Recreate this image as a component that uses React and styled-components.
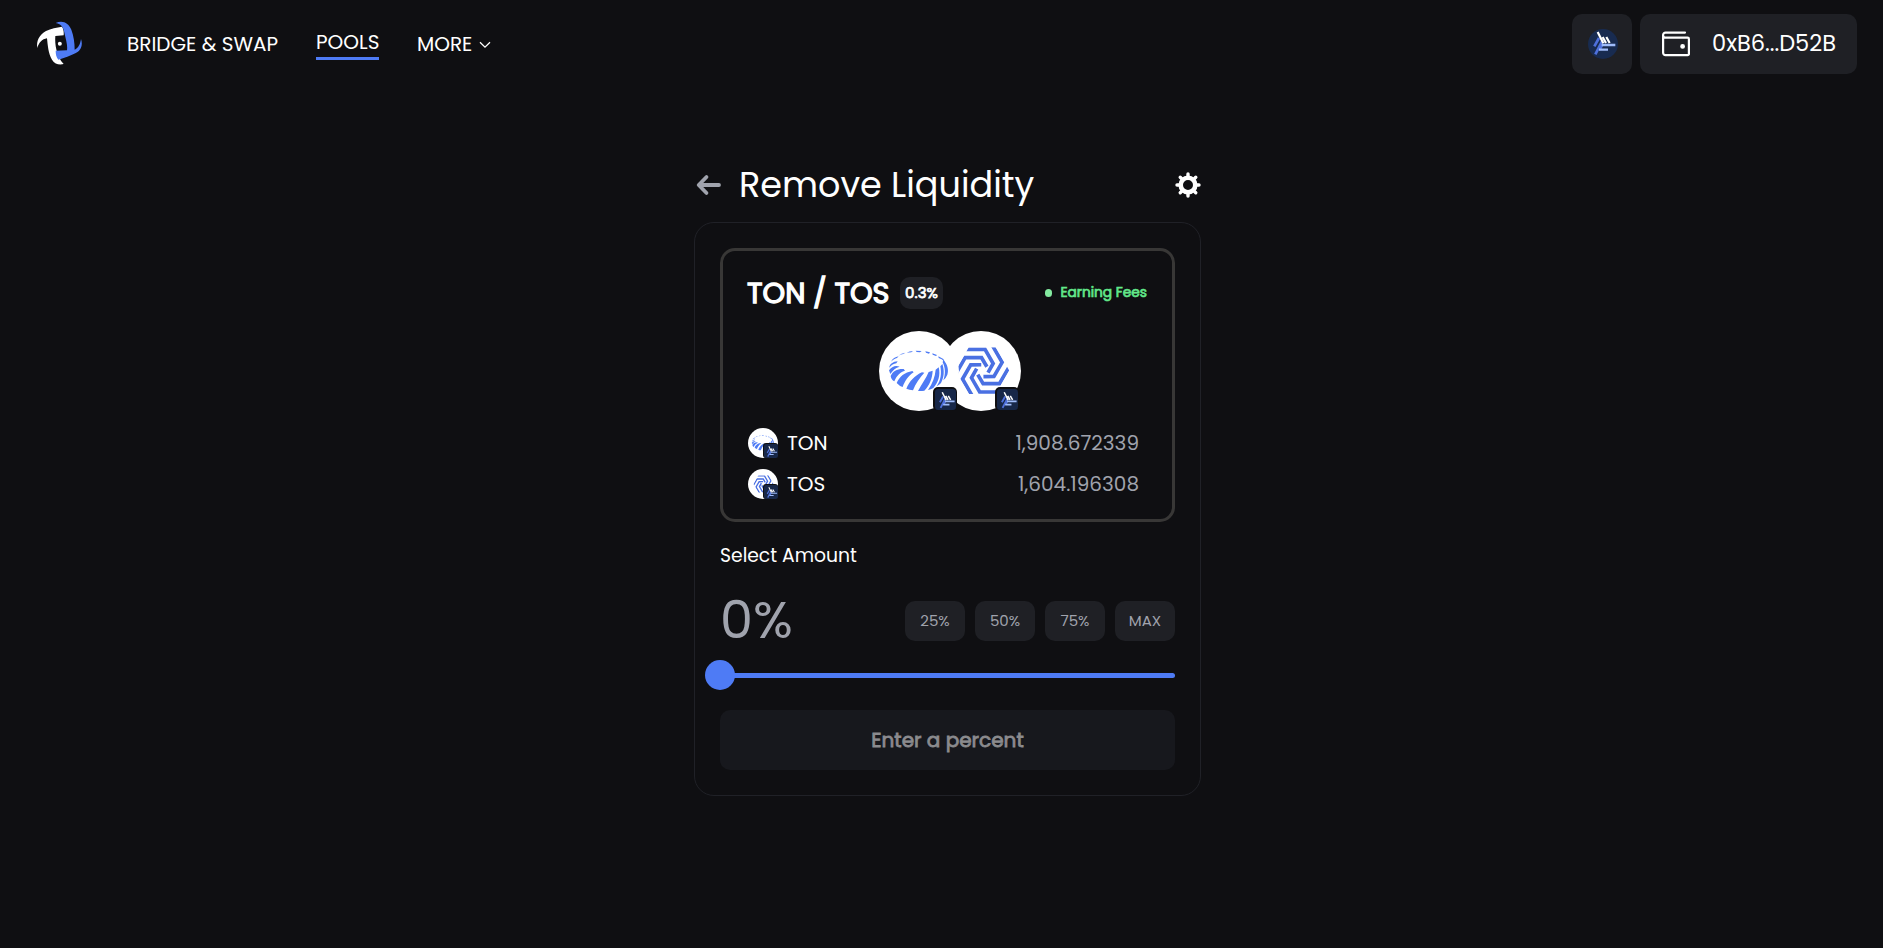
import React from "react";
import styled, { createGlobalStyle } from "styled-components";

const GlobalStyle = createGlobalStyle`
  *, *::before, *::after { box-sizing: border-box; }
  html, body { margin: 0; background: #0f0f12; }
  body {
    font-family: Poppins, Inter, "Open Sans", sans-serif;
    color: #ffffff;
    overflow: hidden;
  }
  button { font: inherit; color: inherit; border: 0; padding: 0; cursor: pointer; }
  svg { display: block; flex: none; }
`;

const Page = styled.div`
  height: 948px;
  background: #0f0f12;
`;

const Header = styled.header`
  display: flex;
  align-items: flex-start;
  height: 88px;
  padding: 14px 26px 0 36px;
`;

const LogoLink = styled.a`
  margin: 7px 43px 0 0;
`;

const Nav = styled.nav`
  display: flex;
  gap: 38px;
  padding-top: 15px;
`;

const NavItem = styled.a`
  display: flex;
  align-items: center;
  height: ${(p) => (p.$active ? "31px" : "30px")};
  width: ${(p) => p.$w}px;
  padding-bottom: ${(p) => (p.$active ? "3px" : "0")};
  border-bottom: ${(p) => (p.$active ? "3px solid #4e7bf5" : "0")};
  font-size: 20px;
  line-height: 24px;
  white-space: nowrap;
  svg { margin: 2px 0 0 7px; }
`;

const Account = styled.div`
  display: flex;
  gap: 8px;
  margin-left: auto;
`;

const HeaderButton = styled.button`
  display: flex;
  align-items: center;
  justify-content: ${(p) => (p.$wide ? "flex-start" : "center")};
  width: ${(p) => (p.$wide ? 217 : 60)}px;
  height: 60px;
  padding-left: ${(p) => (p.$wide ? 21 : 1)}px;
  gap: 21px;
  border-radius: 10px;
  background: #1f2025;
  white-space: nowrap;
`;

const Address = styled.span`
  padding-bottom: 2px;
  font-size: 22.5px;
  line-height: 34px;
`;

const Main = styled.main`
  width: 507px;
  margin: 0 0 0 694px;
  padding-top: 72px;
`;

const TitleRow = styled.div`
  display: flex;
  align-items: center;
  height: 50px;
  margin-bottom: 12px;
  padding-left: 2px;
`;

const Title = styled.h1`
  margin: 0 auto 0 17px;
  font-size: 35px;
  font-weight: 400;
  line-height: 50px;
`;

const Card = styled.section`
  height: 574px;
  padding: 25px 25px 0;
  border: 1px solid #202127;
  border-radius: 20px;
`;

const Position = styled.div`
  height: 274px;
  padding: 22px 25px 0;
  border: 3px solid #383736;
  border-radius: 15px;
`;

const PairRow = styled.div`
  display: flex;
  align-items: center;
  height: 40px;
`;

const PairName = styled.h2`
  margin: 0 0 0 -1px;
  width: 153px;
  font-size: 28.75px;
  font-weight: 400;
  -webkit-text-stroke: 0.045em;
  white-space: nowrap;
`;

const FeeChip = styled.span`
  display: flex;
  align-items: center;
  justify-content: center;
  width: 43px;
  height: 32px;
  padding-bottom: 1px;
  border-radius: 10px;
  background: #1f2025;
  font-size: 15px;
  -webkit-text-stroke: 0.05em;
`;

const Status = styled.span`
  display: flex;
  align-items: center;
  gap: 8px;
  margin-left: auto;
  color: #62e88a;
  font-size: 13.75px;
  -webkit-text-stroke: 0.05em;
  white-space: nowrap;
  &::before {
    content: "";
    width: 7px;
    height: 8px;
    border-radius: 4px;
    background: #84eaa0;
  }
`;

const TokenPair = styled.div`
  display: flex;
  padding-left: 131px;
  height: 80px;
  margin: 18px 0 17px;
`;

const Token = styled.span`
  position: relative;
  display: block;
  width: ${(p) => p.$size}px;
  height: ${(p) => p.$size}px;
  flex: none;
  border-radius: 50%;
  background: #ffffff;
  &:first-child { z-index: 1; }
  & + & { margin-left: -18px; }
`;

const Badge = styled.span`
  position: absolute;
  right: ${(p) => (p.$small ? 0 : p.$inset)}px;
  bottom: 0;
  width: ${(p) => (p.$small ? 15 : 24)}px;
  height: ${(p) => (p.$small ? 15 : 24)}px;
  padding: ${(p) => (p.$small ? "1px 0 0 1px" : "2px 1px 1px 2px")};
  border-radius: ${(p) => (p.$small ? 3 : 5)}px;
  background: #0f0f12;
`;

const TokenRow = styled.div`
  display: flex;
  align-items: center;
  height: 30px;
  margin-bottom: 11px;
  padding-right: 8px;
  font-size: 20px;
`;

const Symbol = styled.span`
  margin-left: 9px;
`;

const Amount = styled.span`
  margin-left: auto;
  color: #a0a3ad;
`;

const Label = styled.div`
  margin-top: 19px;
  height: 30px;
  line-height: 30px;
  font-size: 18.75px;
`;

const AmountRow = styled.div`
  display: flex;
  align-items: center;
  height: 60px;
  margin-top: 20px;
`;

const Percent = styled.div`
  margin: -3px auto 0 0;
  color: #a0a3ad;
  font-size: 52.5px;
`;

const Presets = styled.div`
  display: flex;
  gap: 10px;
`;

const Preset = styled.button`
  width: 60px;
  height: 40px;
  padding-bottom: 1px;
  border-radius: 10px;
  background: #1f2025;
  && { color: #a0a3ad; font-size: 15px; }
`;

const Slider = styled.div`
  display: flex;
  align-items: center;
  height: 30px;
  margin: 9px 0 20px -15px;
`;

const Thumb = styled.span`
  width: 30px;
  height: 30px;
  border-radius: 50%;
  background: #4e7bf5;
`;

const Track = styled.span`
  flex: 1;
  height: 5px;
  margin-left: -2px;
  border-radius: 0 3px 3px 0;
  background: #4e7bf5;
`;

const Submit = styled.button`
  display: block;
  width: 455px;
  height: 60px;
  border-radius: 10px;
  background: #17181d;
  && { color: #8b8b8e; font-size: 20px; -webkit-text-stroke: 0.04em; }
`;

const BrandMark = () => (
  <svg width="48" height="46" viewBox="18 18 144 138">
    <path fill="#fff" d="M22 99C18 78 28 59 48 48C63 40 80 38 96 35C101 43 102 53 101 61L76 63C74 85 79 125 101 147C88 151 74 147 66 134C55 116 53 90 51 70C36 72 26 84 22 99Z" />
    <path fill="#4e7bf5" d="M77 24C99 14 116 25 124 44C131 62 134 83 134 104C145 99 151 87 153 72C160 92 151 108 136 115C121 122 104 129 85 134C79 127 77 117 77 107L111 106C113 90 108 75 104 57C101 39 95 26 77 24Z" />
    <circle cx="89.5" cy="86" r="6" fill="#fff" />
  </svg>
);

const NetworkGlyph = () => (
  <g fill="none">
    <path stroke="#4e70dc" strokeWidth="8" d="M33 27L19 52M42 37L22 76M43 47L35 62" />
    <path stroke="#9fbcfa" strokeWidth="7" d="M41 48L82 48M33 62L60 62" />
    <path stroke="#fff" strokeWidth="6.5" d="M29 9L46 43M44 24L54 42M55 24L65 42" />
  </g>
);

const NetworkIcon = () => (
  <svg width="30" height="30" viewBox="0 0 90 90">
    <circle cx="45" cy="45" r="45" fill="#182b50" />
    <NetworkGlyph />
  </svg>
);

const BadgeIcon = ({ size }) => (
  <svg width={size} height={size} viewBox="0 0 90 90">
    <rect width="90" height="90" rx="14" fill="#172748" />
    <g transform="translate(2 5)">
      <NetworkGlyph />
    </g>
  </svg>
);

const TonMark = ({ size }) => (
  <svg width={size} height={size} viewBox="27 33 240 240">
    <g fill="#4e7bf5">
      <path d="M57 151C65 140 76 135 89 140C77 143 69 150 61 162Z" />
      <path d="M62 168C68 154 82 146 101 147L105 152C92 155 80 166 73 184C67 181 63 175 62 168Z" />
      <path d="M80 189C88 170 104 157 127 153L131 157C116 166 104 184 98 201Q88 198 80 189Z" />
      <path d="M109 206C118 184 134 167 156 157L163 158C150 172 137 190 129 211Q118 210 109 206Z" />
      <path d="M144 213C155 192 168 176 176 156L188 152C187 175 178 197 163 212Q153 214 144 213Z" />
      <path d="M174 210C188 190 195 170 197 149L206 142C212 165 205 188 190 204Q183 208 174 210Z" />
      <path d="M200 199C213 180 215 160 211 139L217 132C224 153 222 172 213 189Q208 195 200 199Z" />
      <path d="M220 181C227 162 226 143 218 127L220 119C232 132 237 149 232 164Q228 174 220 181Z" />
      <path d="M58 143C59 132 69 125 83 124L79 130C71 131 65 135 58 143Z" />
      <path d="M63 125C68 116 75 111 86 109L81 114C75 116 70 119 63 125Z" />
      <path d="M85 107Q94 99 106 98L100 102Q94 103 85 107Z" />
      <path d="M110 98Q118 93 129 93L124 97ZM137 92L155 93L150 97L140 96ZM166 94L180 97L177 101L168 98ZM187 100L201 105L198 108L188 104ZM205 109L220 117L224 125Q215 116 206 114Z" />
    </g>
  </svg>
);

const TosMark = ({ size }) => (
  <svg width={size} height={size} viewBox="-124 -119 240 240">
    <clipPath id="tos-hexagon">
      <path d="M-81 0L-40.5 -70L40.5 -70L81 0L40.5 70L-40.5 70Z" />
    </clipPath>
    <g clipPath="url(#tos-hexagon)">
      <g fill="none" stroke="#4a70e2" strokeWidth="11">
        {[0, 60, 120, 180, 240, 300].map((angle) => (
          <path key={angle} transform={`rotate(${angle})`} d="M-56 -64L8 -64L32.5 -21.5L17 6" />
        ))}
      </g>
    </g>
  </svg>
);

const WalletIcon = () => (
  <svg width="30" height="28" viewBox="0 0 30 28" fill="none" stroke="#fff" strokeWidth="2.2" strokeLinecap="round" strokeLinejoin="round">
    <path d="M24 2.6H4.5A2.4 2.4 0 0 0 2.1 5V22.8A2.4 2.4 0 0 0 4.5 25.2H26.6A1.3 1.3 0 0 0 27.9 23.9V9A1.3 1.3 0 0 0 26.6 7.7H4.5A2.4 2.4 0 0 1 2.1 5.3" />
    <circle cx="21.6" cy="16.4" r="1.6" fill="#fff" strokeWidth="1.6" />
  </svg>
);

const BackIcon = () => (
  <svg width="26" height="22" viewBox="0 0 26 22" fill="none" stroke="#a0a3ad" strokeWidth="3.8" strokeLinecap="round" strokeLinejoin="round">
    <path d="M10.5 3L2.7 11L10.5 19M3.3 11H23" />
  </svg>
);

const GearIcon = () => (
  <svg width="26" height="26" viewBox="-13 -13 26 26" fill="none" stroke="#fff" strokeLinecap="round">
    <circle r="7.3" strokeWidth="4.6" />
    {[0, 45, 90, 135, 180, 225, 270, 315].map((angle) => (
      <path key={angle} transform={`rotate(${angle})`} d="M0 -8V-11" strokeWidth="3.4" />
    ))}
  </svg>
);

const ChevronIcon = () => (
  <svg width="12" height="8" viewBox="0 0 12 8" fill="none" stroke="#fff" strokeWidth="1.3">
    <path d="M1 1.2L6 6.2L11 1.2" />
  </svg>
);

const marks = { TON: TonMark, TOS: TosMark };

const TokenIcon = ({ symbol, size, inset = 0 }) => {
  const Mark = marks[symbol];
  const small = size < 40;
  return (
    <Token $size={size}>
      <Mark size={size} />
      <Badge $small={small} $inset={inset}>
        <BadgeIcon size={small ? 14 : 21} />
      </Badge>
    </Token>
  );
};

export default function App() {
  return (
    <Page>
      <GlobalStyle />
      <Header>
        <LogoLink><BrandMark /></LogoLink>
        <Nav>
          <NavItem $w={151}>BRIDGE &amp; SWAP</NavItem>
          <NavItem $active $w={63}>POOLS</NavItem>
          <NavItem $w={76}>MORE<ChevronIcon /></NavItem>
        </Nav>
        <Account>
          <HeaderButton aria-label="Network"><NetworkIcon /></HeaderButton>
          <HeaderButton $wide><WalletIcon /><Address>0xB6...D52B</Address></HeaderButton>
        </Account>
      </Header>
      <Main>
        <TitleRow>
          <BackIcon />
          <Title>Remove Liquidity</Title>
          <GearIcon />
        </TitleRow>
        <Card>
          <Position>
            <PairRow>
              <PairName>TON / TOS</PairName>
              <FeeChip>0.3%</FeeChip>
              <Status>Earning Fees</Status>
            </PairRow>
            <TokenPair>
              <TokenIcon symbol="TON" size={80} inset={2} />
              <TokenIcon symbol="TOS" size={80} inset={2} />
            </TokenPair>
            <TokenRow>
              <TokenIcon symbol="TON" size={30} />
              <Symbol>TON</Symbol>
              <Amount>1,908.672339</Amount>
            </TokenRow>
            <TokenRow>
              <TokenIcon symbol="TOS" size={30} />
              <Symbol>TOS</Symbol>
              <Amount>1,604.196308</Amount>
            </TokenRow>
          </Position>
          <Label>Select Amount</Label>
          <AmountRow>
            <Percent>0%</Percent>
            <Presets>
              {["25%", "50%", "75%", "MAX"].map((text) => (
                <Preset key={text}>{text}</Preset>
              ))}
            </Presets>
          </AmountRow>
          <Slider>
            <Thumb />
            <Track />
          </Slider>
          <Submit>Enter a percent</Submit>
        </Card>
      </Main>
    </Page>
  );
}
